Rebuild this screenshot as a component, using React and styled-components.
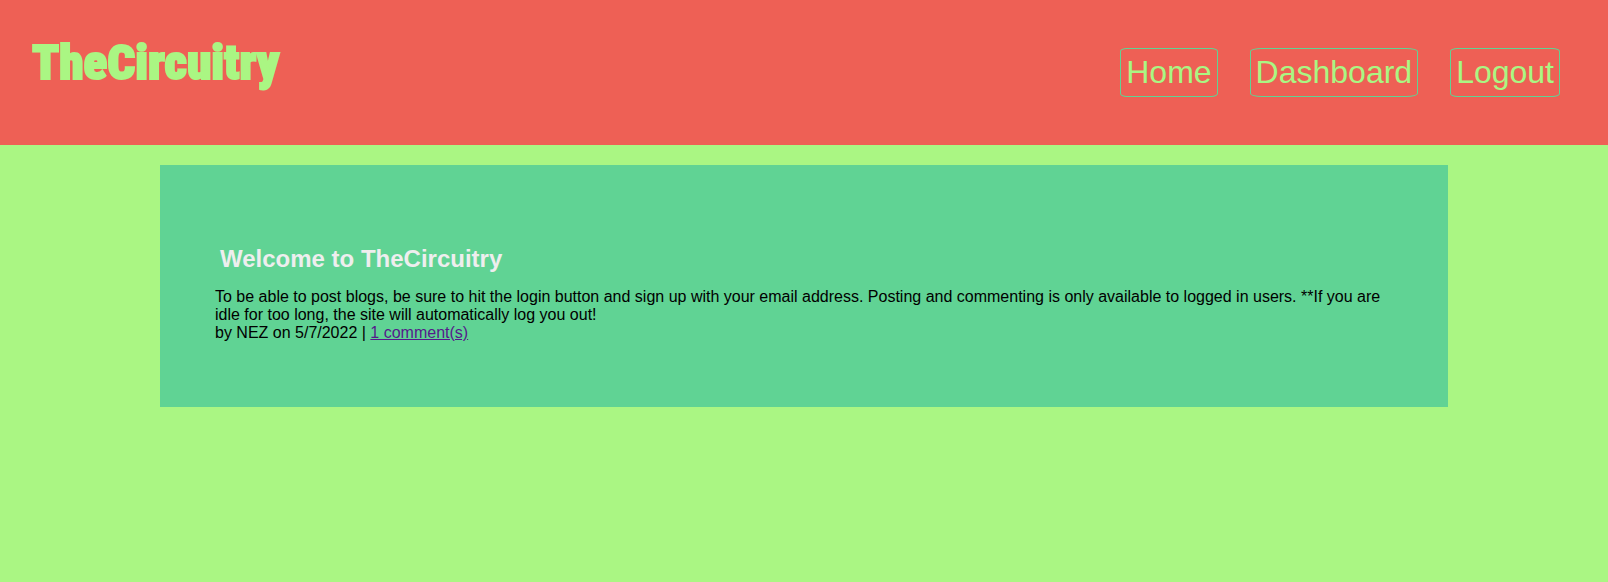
import React from "react";
import styled, { createGlobalStyle } from "styled-components";

const colors = {
  coral: "#ee6055",
  mint: "#60d394",
  lime: "#aaf683",
  light: "#eeeeee",
};

const GlobalStyle = createGlobalStyle`
  *, *::before, *::after { box-sizing: border-box; }
  body {
    margin: 0;
    background: ${colors.lime};
    color: #000;
    font-family: Arial, "Liberation Sans", sans-serif;
    font-size: 16px;
    line-height: 18px;
  }
`;

const Header = styled.header`
  display: flex;
  justify-content: space-between;
  align-items: flex-start;
  padding: 32px 48px 48px 32px;
  background: ${colors.coral};
`;

const Brand = styled.h1`
  margin: 0;
  color: ${colors.lime};
  font-family: Impact, "Roboto Condensed", "Liberation Sans", sans-serif;
  font-size: 49px;
  font-weight: 900;
  line-height: 61px;
  -webkit-text-stroke: 2px ${colors.lime};
`;

const Nav = styled.nav`
  display: flex;
  gap: 32px;
  padding-top: 16px;
`;

const NavLink = styled.a`
  padding: 5px;
  border: 1px solid ${colors.mint};
  border-radius: 7%;
  color: ${colors.lime};
  font-size: 32px;
  line-height: 37px;
  text-decoration: none;
`;

const Post = styled.article`
  margin: 20px 160px;
  padding: 80px 55px 65px;
  background: ${colors.mint};
`;

const PostTitle = styled.h2`
  margin: 0 0 16px;
  padding-left: 5px;
  color: ${colors.light};
  font-size: 24px;
  line-height: 27px;
`;

const PostText = styled.p`
  margin: 0;
`;

const CommentLink = styled.a`
  color: #551a8b;
`;

const links = ["Home", "Dashboard", "Logout"];

export default function App() {
  return (
    <>
      <GlobalStyle />
      <Header>
        <Brand>TheCircuitry</Brand>
        <Nav>
          {links.map((label) => (
            <NavLink key={label} href={`#${label.toLowerCase()}`}>
              {label}
            </NavLink>
          ))}
        </Nav>
      </Header>
      <main>
        <Post>
          <PostTitle>Welcome to TheCircuitry</PostTitle>
          <PostText>
            To be able to post blogs, be sure to hit the login button and sign up
            with your email address. Posting and commenting is only available to
            logged in users. **If you are idle for too long, the site will
            automatically log you out!
          </PostText>
          <PostText>
            by NEZ on 5/7/2022 | <CommentLink href="#comments">1 comment(s)</CommentLink>
          </PostText>
        </Post>
      </main>
    </>
  );
}
